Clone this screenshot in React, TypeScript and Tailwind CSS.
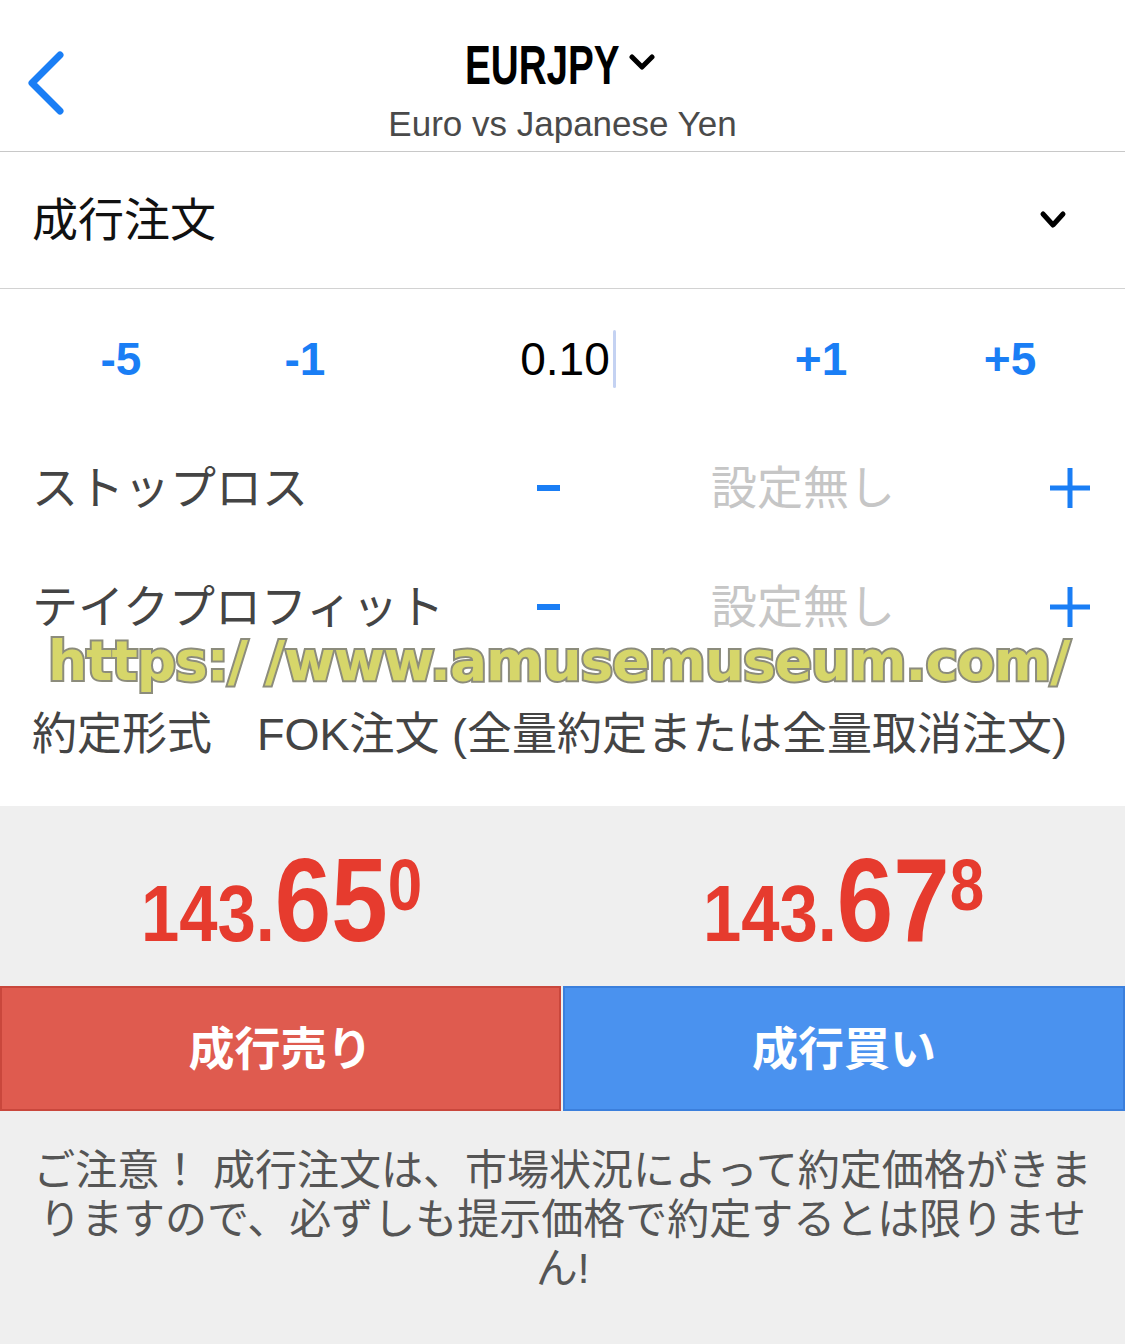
import React from "react";

const jp = "font-['Liberation_Sans','Noto_Sans_CJK_JP',sans-serif]";
const latin = "font-['Liberation_Sans',Arial,sans-serif]";

function MinusPlusRow({ label }: { label: string }) {
  return (
    <div className="flex h-[119px] items-center pl-[32px]">
      <div className="w-[480px] text-[46px] leading-none text-[#444444]">{label}</div>
      <div className="flex w-[72px] justify-center">
        <div className="h-[6px] w-[23px] bg-[#1a7ef5]" />
      </div>
      <div className="w-[438px] text-center text-[46px] leading-none text-[#c6c6c6]">設定無し</div>
      <svg className="ml-[26px]" width="44" height="44" viewBox="0 0 44 44">
        <path d="M22 2v40M2 22h40" stroke="#1a7ef5" strokeWidth="5" fill="none" />
      </svg>
    </div>
  );
}

function Price({ head, big, sup }: { head: string; big: string; sup: string }) {
  return (
    <div className={`flex flex-1 justify-center pt-[35px] ${latin} font-bold text-[#e63b2e]`}>
      <div className="flex scale-x-[0.86] items-baseline">
        <span className="text-[80px] leading-none">{head}</span>
        <span className="text-[118px] leading-none">{big}</span>
        <span className="mt-[8px] self-start text-[72px] leading-none">{sup}</span>
      </div>
    </div>
  );
}

export default function App() {
  return (
    <div className={`flex h-[1344px] w-[1125px] flex-col bg-[#efefef] ${jp}`}>
      {/* Header */}
      <div className="grid h-[152px] shrink-0 grid-cols-[1fr_auto_1fr] border-b border-[#c8c8c8] bg-white">
        <div className="pl-[26px] pt-[50px]">
          <svg width="42" height="66" viewBox="0 0 42 66">
            <path d="M34 5L6 33l28 28" stroke="#1a7ef5" strokeWidth="7" strokeLinecap="round" strokeLinejoin="round" fill="none" />
          </svg>
        </div>
        <div className="flex flex-col items-center pt-[37px]">
          <div className="flex items-center gap-[10px] pr-[4px]">
            <span
              className={`${latin} inline-block w-[154px] origin-left scale-x-[0.69] whitespace-nowrap text-[56px] font-bold leading-none text-black`}
            >
              EURJPY
            </span>
            <svg width="26" height="18" viewBox="0 0 26 18" className="mt-[-6px]">
              <path d="M3 4l10 10L23 4" stroke="#000" strokeWidth="5" strokeLinecap="round" strokeLinejoin="round" fill="none" />
            </svg>
          </div>
          <div className="mt-[13px] text-[35px] leading-none text-[#4a4a4a]">Euro vs Japanese Yen</div>
        </div>
        <div />
      </div>

      {/* Order type */}
      <div className="flex h-[137px] shrink-0 items-center justify-between border-b border-[#d2d2d2] bg-white pl-[32px] pr-[58px]">
        <span className="text-[46px] leading-none text-[#111111]">成行注文</span>
        <svg width="28" height="20" viewBox="0 0 28 20">
          <path d="M4 4l10 11L24 4" stroke="#000" strokeWidth="5" strokeLinecap="round" strokeLinejoin="round" fill="none" />
        </svg>
      </div>

      {/* Order settings */}
      <div className="relative shrink-0 bg-white">
        <div className="flex h-[139px] items-center pl-[30px] text-[46px] leading-none">
          <div className="w-[182px] text-center font-bold text-[#1a7ef5]">-5</div>
          <div className="w-[186px] text-center font-bold text-[#1a7ef5]">-1</div>
          <div className="flex w-[336px] items-center justify-center pl-[4px] text-black">
            <span>0.10</span>
            <span className="ml-[3px] h-[58px] w-[3px] rounded-full bg-[#c4d2f2]" />
          </div>
          <div className="w-[174px] text-center font-bold text-[#1a7ef5]">+1</div>
          <div className="w-[204px] text-center font-bold text-[#1a7ef5]">+5</div>
        </div>

        <MinusPlusRow label="ストップロス" />
        <MinusPlusRow label="テイクプロフィット" />

        <div className="flex h-[140px] items-center pl-[32px] pb-[4px] text-[45px] leading-none text-[#444444]">
          約定形式　FOK注文 (全量約定または全量取消注文)
        </div>

        <div className="pointer-events-none absolute left-[48px] top-[345px] whitespace-nowrap font-['DejaVu_Sans',sans-serif] text-[55px] font-bold leading-none tracking-[-1px] text-[#d6d66a] [-webkit-text-stroke:4px_#8c8c7c] [paint-order:stroke_fill]">
          https:/ /www.amusemuseum.com/
        </div>
      </div>

      {/* Prices */}
      <div className="flex h-[180px] shrink-0">
        <Price head="143." big="65" sup="0" />
        <Price head="143." big="67" sup="8" />
      </div>

      {/* Buttons */}
      <div className="flex h-[125px] shrink-0 gap-[2px]">
        <button className="flex w-[561px] items-center justify-center border-2 border-[#c9473c] bg-[#df5b4f] text-[46px] font-bold leading-none text-white">
          成行売り
        </button>
        <button className="flex flex-1 items-center justify-center border-2 border-[#3b7fdc] bg-[#4a92ef] text-[46px] font-bold leading-none text-white">
          成行買い
        </button>
      </div>

      {/* Notice */}
      <div className="px-[10px] pt-[35px] text-center text-[42px] leading-[49px] text-[#555555]">
        ご注意！ 成行注文は、市場状況によって約定価格がきま
        <br />
        りますので、必ずしも提示価格で約定するとは限りませ
        <br />
        ん!
      </div>
    </div>
  );
}
